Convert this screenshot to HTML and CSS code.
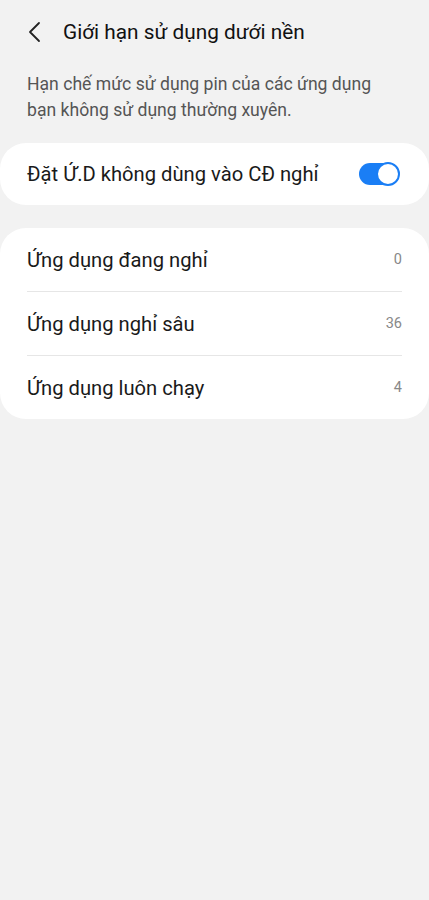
FILE: index.html
```html
<!DOCTYPE html>
<html>
<head>
    <title>Giới hạn sử dụng dưới nền</title>
    <link rel="stylesheet" href="styles.css">
</head>
<body>
    <div class="header">
        <svg class="back" width="16" height="22" viewBox="0 0 16 22">
            <path d="M12 2 L3 11 L12 20" fill="none" stroke="#222" stroke-width="1.8" stroke-linecap="round" stroke-linejoin="round"/>
        </svg>
        <div class="title">Giới hạn sử dụng dưới nền</div>
    </div>

    <div class="desc">Hạn chế mức sử dụng pin của các ứng dụng bạn không sử dụng thường xuyên.</div>

    <div class="card switch-card">
        <div class="row">
            <span class="row-label">Đặt Ứ.D không dùng vào CĐ nghỉ</span>
            <span class="toggle"><span class="knob"></span></span>
        </div>
    </div>

    <div class="card list-card">
        <div class="row">
            <span class="row-label">Ứng dụng đang nghỉ</span>
            <span class="row-value">0</span>
        </div>
        <div class="row">
            <span class="row-label">Ứng dụng nghỉ sâu</span>
            <span class="row-value">36</span>
        </div>
        <div class="row">
            <span class="row-label">Ứng dụng luôn chạy</span>
            <span class="row-value">4</span>
        </div>
    </div>
</body>
</html>
```

FILE: styles.css
```css
body {
    margin: 0;
    background-color: #f2f2f2;
    font-family: Roboto, "Noto Sans", sans-serif;
    color: #1a1a1a;
}

.header {
    display: flex;
    align-items: center;
    height: 64px;
    padding-left: 27px;
}

.back {
    margin-right: 20px;
}

.title {
    font-size: 20.8px;
    color: #111;
}

.desc {
    padding: 7px 40px 0 27px;
    font-size: 17.6px;
    line-height: 26px;
    color: #555;
}

.card {
    background: white;
    border-radius: 26px;
}

.switch-card {
    margin-top: 20px;
}

.list-card {
    margin-top: 23px;
}

.row {
    display: flex;
    align-items: center;
    justify-content: space-between;
    height: 63px;
    margin: 0 27px;
    font-size: 20.2px;
}

.switch-card .row {
    height: 62px;
    margin-right: 30px;
}

.list-card .row + .row {
    border-top: 1px solid #e6e6e6;
}

.row-value {
    font-size: 14.5px;
    color: #888;
}

.toggle {
    position: relative;
    width: 40px;
    height: 22px;
    border-radius: 11px;
    background: #1a7ef5;
}

.knob {
    position: absolute;
    right: -1px;
    top: -1px;
    width: 20px;
    height: 20px;
    border-radius: 50%;
    background: white;
    border: 2px solid #1a7ef5;
}
```
